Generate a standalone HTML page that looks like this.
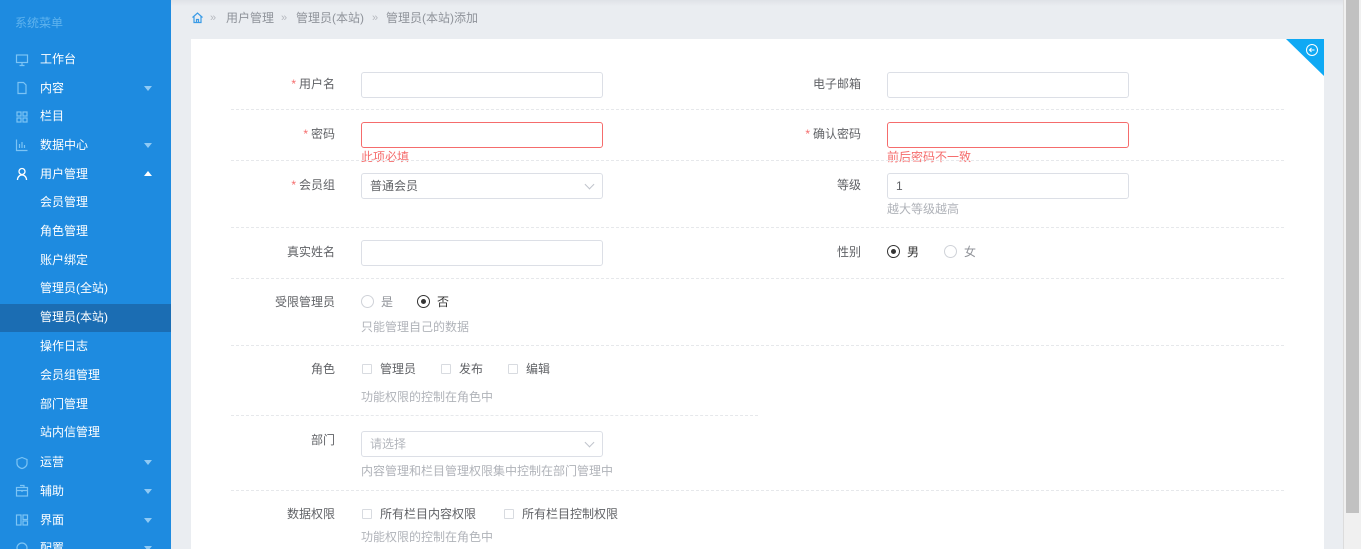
<!DOCTYPE html>
<html><head><meta charset="utf-8">
<style>
*{margin:0;padding:0;box-sizing:border-box;white-space:nowrap}
html{width:1361px;height:549px;overflow:hidden}
body{width:1361px;height:549px;overflow:hidden;background:#eaedf1;font-family:"Liberation Sans","Noto Sans CJK SC",sans-serif;font-size:12px;color:#606266;position:relative}
.a{position:absolute}
#side{left:0;top:0;width:171px;height:549px;background:#1e8be0;color:#fff}
.mi{position:absolute;left:40px;font-size:12px;color:#fff;line-height:16px}
.ic{position:absolute;left:15px;width:14px;height:14px}
.car{position:absolute;left:144px;width:0;height:0;border-left:4.5px solid transparent;border-right:4.5px solid transparent;border-top:5px solid #8fcaf5}
.car.up{border-top:none;border-bottom:5px solid #fff}
#card{left:191px;top:39px;width:1133px;height:520px;background:#fff}
.lbl{position:absolute;text-align:right;width:120px;line-height:16px;color:#606266}
.lbl i{color:#f56c6c;font-style:normal;margin-right:3px}
.in{position:absolute;width:242px;height:26px;border:1px solid #dcdfe6;border-radius:3px;background:#fff;padding-left:8px;line-height:24px;color:#606266}
.in.err{border-color:#f56c6c}
.hint{position:absolute;font-size:12px;color:#b0b3b9;line-height:14px}
.err-t{position:absolute;font-size:12px;color:#f56c6c;line-height:14px}
.dash{position:absolute;height:0;border-top:1px dashed #e6e8eb}
.rad{position:absolute;width:13px;height:13px;border:1px solid #cfd2d8;border-radius:50%;background:#fff}
.rad.on{border-color:#333}
.rad.on:after{content:"";position:absolute;left:3px;top:3px;width:5px;height:5px;border-radius:50%;background:#333}
.cb{position:absolute;width:10px;height:10px;border:1px solid #d8dbe0;border-radius:1px}
.t{position:absolute;line-height:16px}
.bc{position:absolute;top:10px;line-height:16px;color:#8f939a;font-size:12px}
.bs{position:absolute;top:10px;line-height:16px;color:#b6b9bf;font-size:11px}
.chev{position:absolute;right:9px;top:7px;width:7px;height:7px;border-right:1px solid #c0c4cc;border-bottom:1px solid #c0c4cc;transform:rotate(45deg)}
</style></head><body>
<div id="side" class="a">
 <div class="a" style="left:15px;top:14px;font-size:12px;color:#5fb3ee">系统菜单</div>
 <svg class="ic" style="top:53px" viewBox="0 0 14 14" fill="none" stroke="#7cc4f5" stroke-width="1.2"><rect x="1.5" y="2" width="11" height="7.5"/><path d="M7 9.5v2.5M4.5 12.5h5"/></svg>
 <div class="mi" style="top:51px">工作台</div>
 <svg class="ic" style="top:81px" viewBox="0 0 14 14" fill="none" stroke="#7cc4f5" stroke-width="1.2"><path d="M3 1.5h5.5l2.5 2.5v8.5H3z"/></svg>
 <div class="mi" style="top:80px">内容</div><div class="car" style="top:86px"></div>
 <svg class="ic" style="top:110px" viewBox="0 0 14 14" fill="none" stroke="#7cc4f5" stroke-width="1.2"><rect x="2" y="2" width="4" height="4"/><rect x="8" y="2" width="4" height="4"/><rect x="2" y="8" width="4" height="4"/><rect x="8" y="8" width="4" height="4"/></svg>
 <div class="mi" style="top:108px">栏目</div>
 <svg class="ic" style="top:138px" viewBox="0 0 14 14" fill="none" stroke="#7cc4f5" stroke-width="1.2"><path d="M1.5 1.5v11h11M4.5 10V6M7 10V4M9.5 10V7"/></svg>
 <div class="mi" style="top:137px">数据中心</div><div class="car" style="top:143px"></div>
 <svg class="ic" style="top:167px" viewBox="0 0 14 14" fill="none" stroke="#fff" stroke-width="1.3"><circle cx="7" cy="4.5" r="3"/><path d="M2.5 13c0-3 2-5 4.5-5s4.5 2 4.5 5"/></svg>
 <div class="mi" style="top:166px">用户管理</div><div class="car up" style="top:171px"></div>
 <div class="mi" style="top:194px">会员管理</div>
 <div class="mi" style="top:223px">角色管理</div>
 <div class="mi" style="top:252px">账户绑定</div>
 <div class="mi" style="top:280px">管理员(全站)</div>
 <div class="a" style="left:0;top:304px;width:171px;height:28px;background:#1b6db3"></div>
 <div class="mi" style="top:309px">管理员(本站)</div>
 <div class="mi" style="top:338px">操作日志</div>
 <div class="mi" style="top:367px">会员组管理</div>
 <div class="mi" style="top:396px">部门管理</div>
 <div class="mi" style="top:424px">站内信管理</div>
 <svg class="ic" style="top:456px" viewBox="0 0 14 14" fill="none" stroke="#7cc4f5" stroke-width="1.2"><path d="M7 1.5l5 2v4c0 2.5-2.5 4.5-5 5-2.5-.5-5-2.5-5-5v-4z"/></svg>
 <div class="mi" style="top:454px">运营</div><div class="car" style="top:460px"></div>
 <svg class="ic" style="top:484px" viewBox="0 0 14 14" fill="none" stroke="#7cc4f5" stroke-width="1.2"><rect x="1.5" y="3.5" width="11" height="8.5"/><path d="M1.5 6.5h11M5 1.5h4v2M7 6v2"/></svg>
 <div class="mi" style="top:483px">辅助</div><div class="car" style="top:489px"></div>
 <svg class="ic" style="top:513px" viewBox="0 0 14 14" fill="none" stroke="#7cc4f5" stroke-width="1.2"><rect x="1.5" y="2" width="4.5" height="10"/><rect x="8" y="2" width="4.5" height="4.5"/><rect x="8" y="8" width="4.5" height="4"/></svg>
 <div class="mi" style="top:512px">界面</div><div class="car" style="top:518px"></div>
 <svg class="ic" style="top:541px" viewBox="0 0 14 14" fill="none" stroke="#7cc4f5" stroke-width="1.2"><circle cx="7" cy="7" r="5"/></svg>
 <div class="mi" style="top:540px">配置</div><div class="car" style="top:546px"></div>
</div>
<div class="a" style="left:171px;top:0;width:1173px;height:6px;background:linear-gradient(#dfe2e7,#eaedf1)"></div>
<svg class="a" style="left:191px;top:11px" width="13" height="13" viewBox="0 0 13 13" fill="none" stroke="#3a9be6" stroke-width="1.2"><path d="M1.5 6.5L6.5 2l5 4.5M3 5.5v6h7v-6M5.5 11.5v-3h2v3"/></svg>
<div class="bs" style="left:210px">»</div>
<div class="bc" style="left:226px">用户管理</div>
<div class="bs" style="left:281px">»</div>
<div class="bc" style="left:296px">管理员(本站)</div>
<div class="bs" style="left:372px">»</div>
<div class="bc" style="left:386px">管理员(本站)添加</div>
<div id="card" class="a">
 <svg class="a" style="left:1095px;top:0" width="38" height="37"><path d="M0 0H38V37z" fill="#0fa9f4"/><circle cx="26" cy="11" r="5.5" fill="none" stroke="#fff" stroke-width="1"/><path d="M28.5 11h-5M25.5 9l-2 2 2 2" fill="none" stroke="#fff" stroke-width="1"/></svg>
</div>
<div class="a" style="left:0;top:0;width:1361px;height:549px">
 <div class="lbl" style="left:215px;top:76px"><i>*</i>用户名</div>
 <div class="in" style="left:361px;top:72px"></div>
 <div class="lbl" style="left:741px;top:76px">电子邮箱</div>
 <div class="in" style="left:887px;top:72px"></div>
 <div class="dash" style="left:231px;top:109px;width:1053px"></div>

 <div class="lbl" style="left:215px;top:126px"><i>*</i>密码</div>
 <div class="in err" style="left:361px;top:122px"></div>
 <div class="err-t" style="left:361px;top:150px">此项必填</div>
 <div class="lbl" style="left:741px;top:126px"><i>*</i>确认密码</div>
 <div class="in err" style="left:887px;top:122px"></div>
 <div class="err-t" style="left:887px;top:150px">前后密码不一致</div>
 <div class="dash" style="left:231px;top:160px;width:1053px"></div>

 <div class="lbl" style="left:215px;top:177px"><i>*</i>会员组</div>
 <div class="in" style="left:361px;top:173px">普通会员<div class="chev"></div></div>
 <div class="lbl" style="left:741px;top:177px">等级</div>
 <div class="in" style="left:887px;top:173px">1</div>
 <div class="hint" style="left:887px;top:202px">越大等级越高</div>
 <div class="dash" style="left:231px;top:227px;width:1053px"></div>

 <div class="lbl" style="left:215px;top:244px">真实姓名</div>
 <div class="in" style="left:361px;top:240px"></div>
 <div class="lbl" style="left:741px;top:244px">性别</div>
 <div class="rad on" style="left:887px;top:245px"></div><div class="t" style="left:907px;top:244px;color:#333">男</div>
 <div class="rad" style="left:944px;top:245px"></div><div class="t" style="left:964px;top:244px;color:#909399">女</div>
 <div class="dash" style="left:231px;top:278px;width:1053px"></div>

 <div class="lbl" style="left:215px;top:294px">受限管理员</div>
 <div class="rad" style="left:361px;top:295px"></div><div class="t" style="left:381px;top:294px;color:#909399">是</div>
 <div class="rad on" style="left:417px;top:295px"></div><div class="t" style="left:437px;top:294px;color:#333">否</div>
 <div class="hint" style="left:361px;top:320px">只能管理自己的数据</div>
 <div class="dash" style="left:231px;top:345px;width:1053px"></div>

 <div class="lbl" style="left:215px;top:361px">角色</div>
 <div class="cb" style="left:362px;top:364px"></div><div class="t" style="left:380px;top:361px">管理员</div>
 <div class="cb" style="left:441px;top:364px"></div><div class="t" style="left:459px;top:361px">发布</div>
 <div class="cb" style="left:508px;top:364px"></div><div class="t" style="left:526px;top:361px">编辑</div>
 <div class="hint" style="left:361px;top:390px">功能权限的控制在角色中</div>
 <div class="dash" style="left:231px;top:415px;width:527px"></div>

 <div class="lbl" style="left:215px;top:432px">部门</div>
 <div class="in" style="left:361px;top:431px;color:#b4b7bd">请选择<div class="chev"></div></div>
 <div class="hint" style="left:361px;top:464px">内容管理和栏目管理权限集中控制在部门管理中</div>
 <div class="dash" style="left:231px;top:490px;width:1053px"></div>

 <div class="lbl" style="left:215px;top:506px">数据权限</div>
 <div class="cb" style="left:362px;top:509px"></div><div class="t" style="left:380px;top:506px">所有栏目内容权限</div>
 <div class="cb" style="left:504px;top:509px"></div><div class="t" style="left:522px;top:506px">所有栏目控制权限</div>
 <div class="hint" style="left:361px;top:530px">功能权限的控制在角色中</div>
</div>
<div class="a" style="left:1343px;top:0;width:1px;height:549px;background:#dcdcdc"></div>
<div class="a" style="left:1344px;top:0;width:17px;height:549px;background:#f0f0f0"></div>
<div class="a" style="left:1346px;top:0;width:13px;height:513px;background:#c1c1c1"></div>
</body></html>
